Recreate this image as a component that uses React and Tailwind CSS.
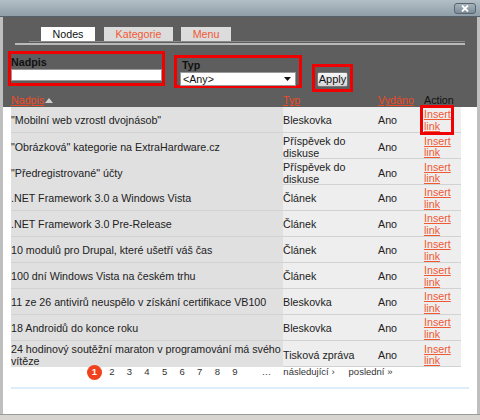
import { useState } from "react";

const rows = [
  ["\"Mobilní web vzrostl dvojnásob\"", "Bleskovka"],
  ["\"Obrázková\" kategorie na ExtraHardware.cz", "Příspěvek do diskuse"],
  ["\"Předregistrované\" účty", "Příspěvek do diskuse"],
  [".NET Framework 3.0 a Windows Vista", "Článek"],
  [".NET Framework 3.0 Pre-Release", "Článek"],
  ["10 modulů pro Drupal, které ušetří váš čas", "Článek"],
  ["100 dní Windows Vista na českém trhu", "Článek"],
  ["11 ze 26 antivirů neuspělo v získání certifikace VB100", "Bleskovka"],
  ["18 Androidů do konce roku", "Bleskovka"],
  ["24 hodinový soutěžní maraton v programování má svého vítěze", "Tisková zpráva"],
];

function CloseButton() {
  return (
    <button className="flex h-[11px] w-[22px] items-center justify-center rounded-[3px] border border-[#566570] bg-gradient-to-b from-[#a6b3bc] to-[#7c8c97]">
      <svg width="8" height="7" viewBox="0 0 8 7">
        <path d="M1 0.5 L7 6.5 M7 0.5 L1 6.5" stroke="#fff" strokeWidth="1.8" />
      </svg>
    </button>
  );
}

export default function App() {
  const [title, setTitle] = useState("");

  return (
    <div className="h-[420px] w-[480px] overflow-hidden bg-[#bfbfbf] font-['Liberation_Sans',Arial,sans-serif] text-[10.7px] text-[#222]">
      {/* title bar */}
      <div className="flex h-[17px] justify-end border-b border-[#56626b] bg-gradient-to-b from-[#b3bfc7] to-[#8f9ea8] pr-[4px] pt-[3px]">
        <CloseButton />
      </div>

      <div className="mx-[3px]">
        {/* dark header */}
        <div className="h-[90px] bg-[#5e5e5e]">
          <div className="flex pt-[10px]">
            <div className="ml-[38px] flex h-[14px] w-[54px] items-center justify-center bg-white text-[#111]">Nodes</div>
            <div className="ml-[9px] flex h-[14px] w-[69px] items-center justify-center bg-[#dcdcdc] text-[#ef5a35]">Kategorie</div>
            <div className="ml-[8px] flex h-[14px] w-[50px] items-center justify-center bg-[#dcdcdc] text-[#ef5a35]">Menu</div>
          </div>
          <div className="ml-[26px] h-px w-[436px] bg-[#8a8a8a]" />
          <div className="ml-[12px] mt-[1px] h-[2px] w-[450px] bg-[#b9b9b9]" />

          <div className="mt-[6px] flex items-start">
            <div className="ml-[5px] h-[35px] w-[157px] border-[3px] border-[#f00000] pt-[2px]">
              <div className="h-[13px] font-bold leading-[13px] text-[#111]">Nadpis</div>
              <input
                value={title}
                onChange={(e) => setTitle(e.target.value)}
                className="block h-[12px] w-[151px] border border-[#9a9a9a] bg-white outline-none"
              />
            </div>
            <div className="ml-[9px] mt-[4px] h-[33px] w-[128px] border-[3px] border-[#f00000] pl-[3px] pt-[1px]">
              <div className="ml-[2px] h-[13px] font-bold leading-[13px] text-[#111]">Typ</div>
              <div className="flex h-[14px] w-[116px] items-center justify-between border border-[#9a9a9a] bg-white pl-[2px] pr-[4px] text-[#111]">
                <span>&lt;Any&gt;</span>
                <svg width="7" height="4" viewBox="0 0 7 4">
                  <path d="M0 0 H7 L3.5 4 Z" fill="#111" />
                </svg>
              </div>
            </div>
            <div className="ml-[10px] mt-[13px] h-[28px] w-[41px] border-[3px] border-[#f00000] pl-[2px] pt-[5px]">
              <button className="flex h-[15px] w-[31px] items-center justify-center rounded-[2px] border border-[#7a7a7a] bg-gradient-to-b from-[#f6f6f6] to-[#d6d6d6] text-[11px] text-[#111]">
                Apply
              </button>
            </div>
          </div>

          <div className="ml-[8px] grid h-[15px] grid-cols-[272px_95px_46px_34px] items-center pt-[1px] leading-[14px]">
            <div className="flex items-center">
              <span className="text-[#ef4a25] underline">Nadpis</span>
              <svg width="8" height="5" viewBox="0 0 8 5" className="ml-[1px]">
                <path d="M0 5 L4 0 L8 5 Z" fill="#cfcfcf" />
              </svg>
            </div>
            <span className="text-[#ef4a25] underline">Typ</span>
            <span className="text-[#ef4a25] underline">Vydáno</span>
            <span className="text-[#111]">Action</span>
          </div>
        </div>

        {/* white body */}
        <div className="h-[307px] bg-white pl-[8px]">
          {rows.map(([name, type], i) => (
            <div
              key={name}
              className="grid h-[26px] w-[450px] grid-cols-[272px_95px_46px_34px] border-b border-[#d2d2d2] bg-[#eeeeee] leading-[11.5px]"
            >
              <div className="flex h-full items-center bg-[#e0e0e0] pr-[2px] pt-[3px]">{name}</div>
              <div className="flex h-full items-center pt-[3px]">{type}</div>
              <div className="flex h-full items-center pt-[3px]">Ano</div>
              <div className="relative flex h-full items-center pt-[2px]">
                <a href="#" className="text-[#ef5a35] underline">Insert link</a>
                {i === 0 ? (
                  <div className="absolute left-[-4px] top-[-2px] h-[30px] w-[34px] border-[3px] border-[#f00000]" />
                ) : null}
              </div>
            </div>
          ))}

          <div className="-mt-[2px] flex h-[15px] items-center text-[9.5px] text-[#333]">
            <span className="ml-[76px] flex h-[15px] w-[15px] items-center justify-center rounded-full bg-[#f0401c] font-bold text-white">1</span>
            <span className="ml-[1px] w-[17.6px] text-center">2</span>
            <span className="w-[17.6px] text-center">3</span>
            <span className="w-[17.6px] text-center">4</span>
            <span className="w-[17.6px] text-center">5</span>
            <span className="w-[17.6px] text-center">6</span>
            <span className="w-[17.6px] text-center">7</span>
            <span className="w-[17.6px] text-center">8</span>
            <span className="w-[17.6px] text-center">9</span>
            <span className="ml-[14px] w-[17.6px] text-center">…</span>
            <span className="ml-[8px]">následující ›</span>
            <span className="ml-[14px]">poslední »</span>
          </div>
          <div className="mt-[7px] h-[2px] w-[458px] bg-[#dceef8]" />
        </div>
      </div>
      <div className="h-[6px] border-t border-[#9c9c9c] bg-[#d8d5d0]" />
    </div>
  );
}
